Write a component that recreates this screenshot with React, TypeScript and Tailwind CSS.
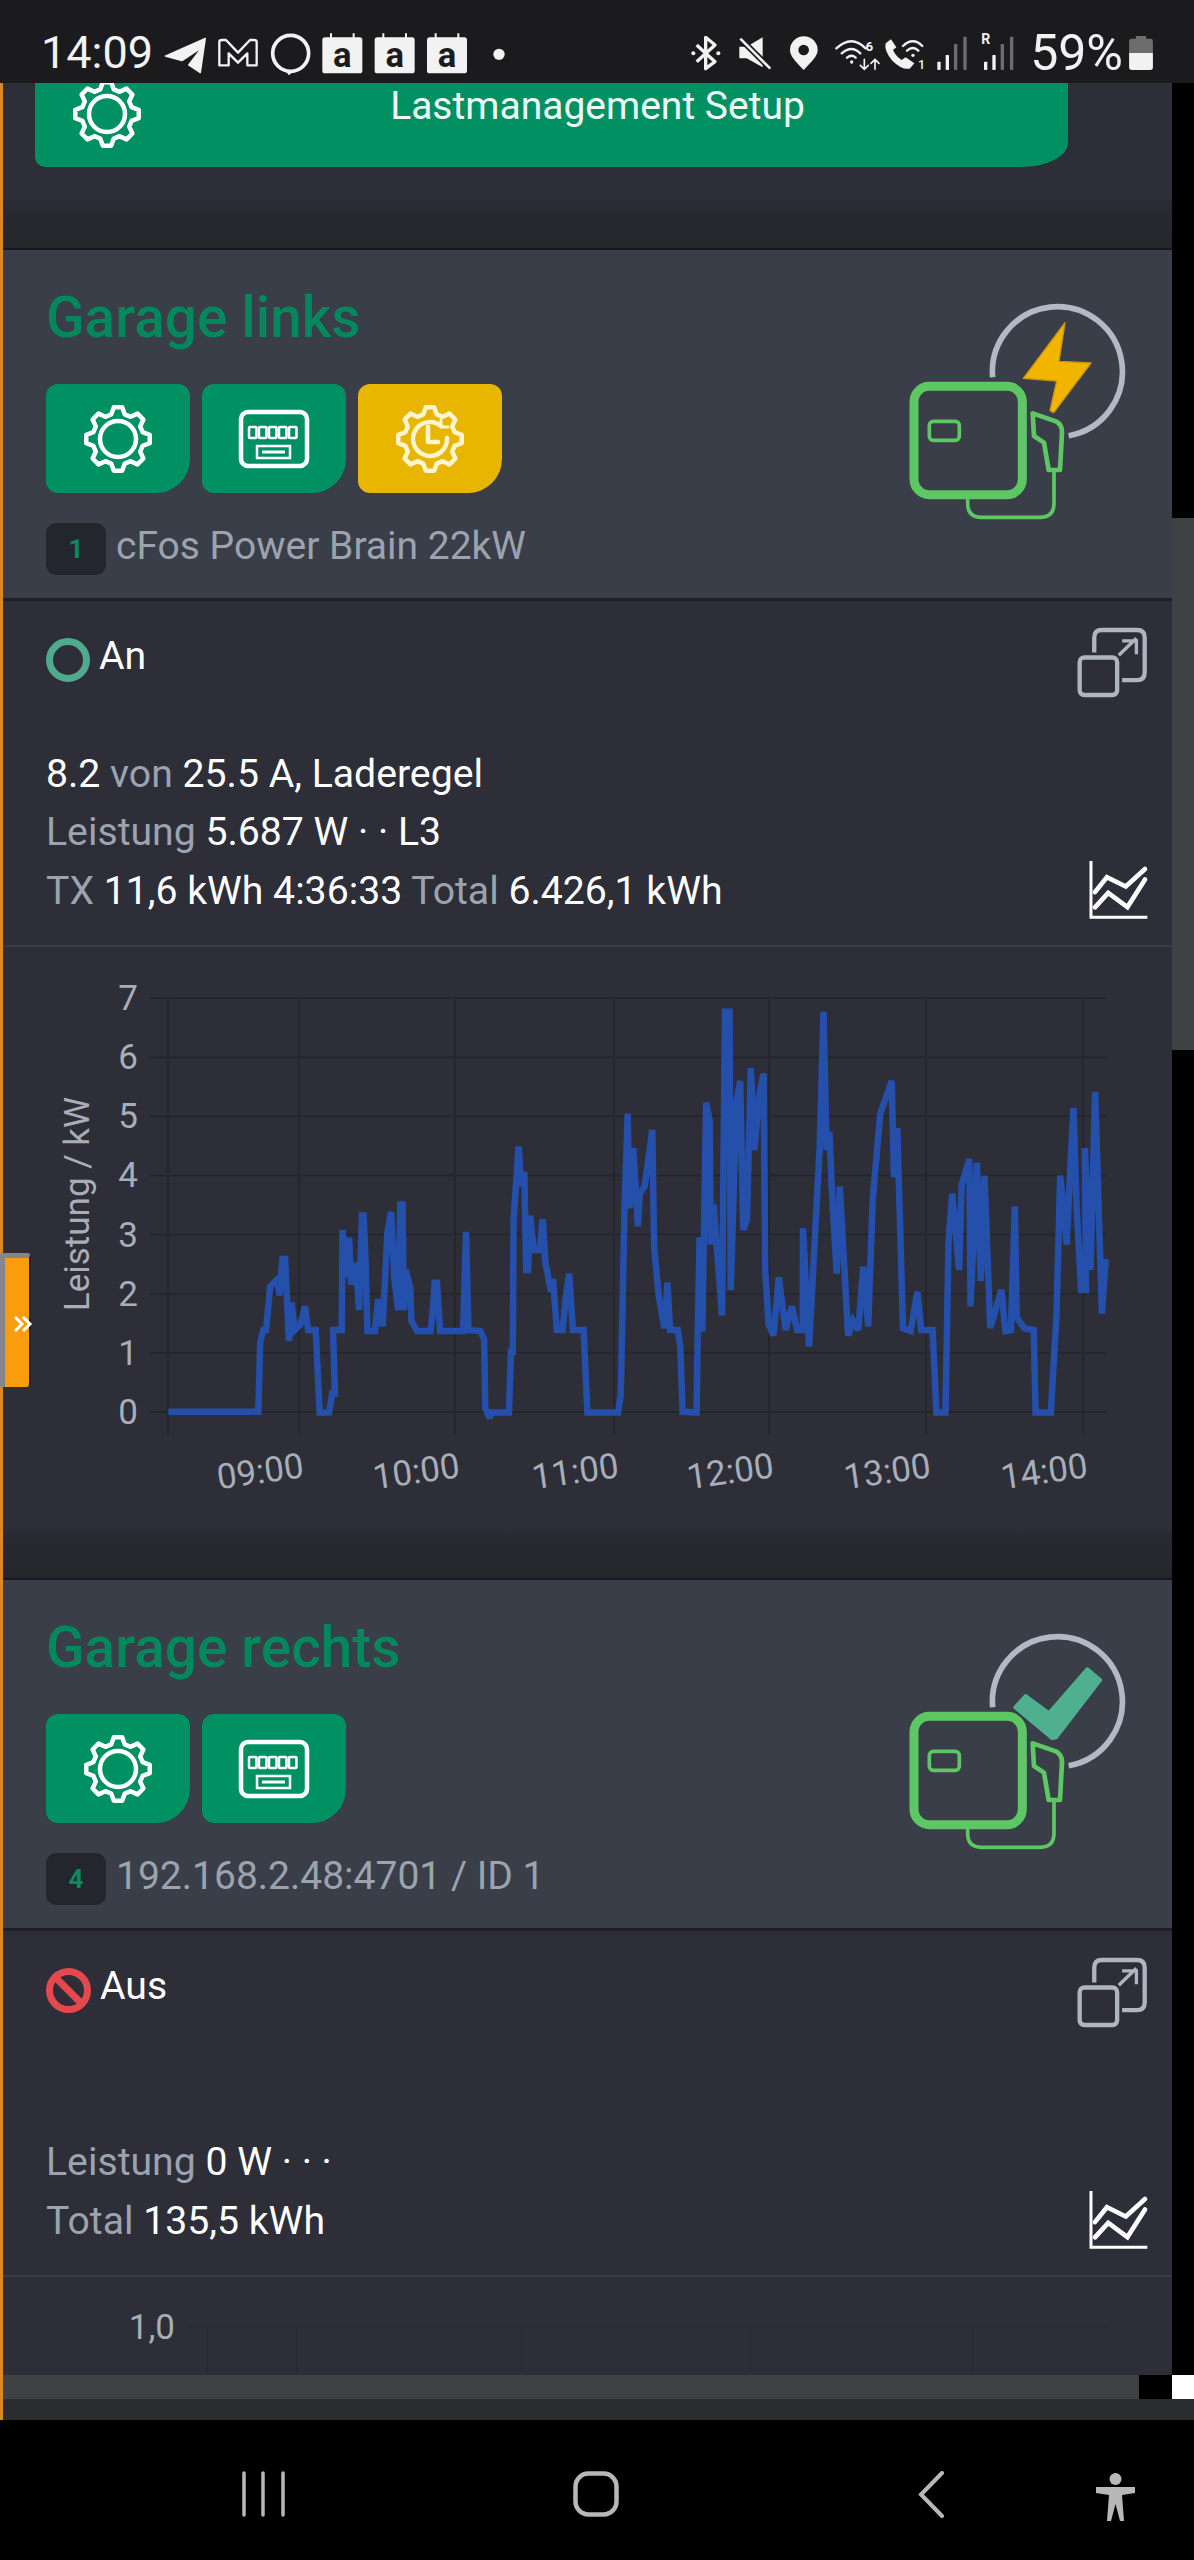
const leftTrace = [440,1270,675,1270,680,1080,688,1045,695,1045,706,925,725,905,730,950,738,850,745,850,755,1075,762,970,770,1045,785,1030,797,980,805,1045,825,1045,835,1272,860,1272,868,1220,875,1220,870,1045,893,1045,895,770,905,900,912,790,918,920,930,860,938,990,946,730,950,730,955,850,960,1048,980,1048,988,960,1000,1035,1012,780,1022,720,1030,900,1040,990,1046,700,1052,700,1055,990,1060,880,1072,930,1075,1020,1090,1048,1125,1048,1130,1000,1136,915,1142,915,1150,1048,1210,1048,1218,775,1224,1045,1255,1048,1265,1070,1268,1260,1280,1288,1282,1272,1330,1272,1335,1105,1340,1105,1342,740,1355,540,1362,650,1370,610,1375,880,1380,880,1385,730,1395,825,1410,825,1418,740,1425,860,1440,940,1445,905,1455,1045,1470,1045,1478,960,1487,890,1497,1045,1525,1045,1535,1272,1568,1272]
const rightTrace = [0,1272,48,1272,55,1220,65,700,73,450,78,710,88,545,100,760,105,670,118,650,138,495,143,820,155,950,170,1040,178,915,185,1045,205,1045,212,1090,218,1270,255,1272,258,1050,263,790,270,1050,280,420,290,470,292,810,300,700,322,1005,330,170,342,170,345,935,360,420,370,360,378,770,388,740,398,325,408,550,420,400,432,340,436,880,445,1030,458,1060,472,900,490,1045,507,980,520,1045,535,1045,536,765,552,1090,580,540,590,170,598,550,606,500,612,660,625,890,633,650,655,1060,668,1020,682,1045,695,870,708,1035,720,685,740,450,770,360,776,625,785,490,800,1040,820,1048,838,940,848,1045,878,1045,888,1272,912,1272,920,800,930,670,948,880,955,645,975,575,978,980,995,585,1005,910,1015,620,1030,1040,1060,935,1070,1048,1085,1045,1095,705,1100,1010,1120,1040,1145,1045,1150,1272,1190,1272,1205,1010,1215,620,1232,810,1240,630,1250,435,1258,700,1270,935,1283,935,1280,545,1295,880,1307,390,1325,1000,1335,850]

function tracePoints() {
  const out: string[] = []
  for (let i = 0; i < leftTrace.length; i += 2) {
    out.push(`${(leftTrace[i] / 2.613).toFixed(1)},${(950 + leftTrace[i + 1] / 2.75).toFixed(1)}`)
  }
  for (let i = 0; i < rightTrace.length; i += 2) {
    out.push(`${(600 + rightTrace[i] / 2.64).toFixed(1)},${(950 + rightTrace[i + 1] / 2.75).toFixed(1)}`)
  }
  return out.join(" ")
}

function gearPath() {
  let d = ""
  for (let i = 0; i < 8; i++) {
    const a = (i * Math.PI) / 4 - Math.PI / 2
    const pts = [[25.5, -0.27], [32, -0.13], [32, 0.13], [25.5, 0.27]]
    pts.forEach(([r, o], j) => {
      const x = (r * Math.cos(a + o)).toFixed(2)
      const y = (r * Math.sin(a + o)).toFixed(2)
      d += `${i === 0 && j === 0 ? "M" : "L"}${x} ${y} `
    })
  }
  return d + "Z"
}

const Gear = ({ clock = false, color = "#fff" }: { clock?: boolean; color?: string }) => (
  <svg width="72" height="72" viewBox="-36 -36 72 72" fill="none" stroke={color} strokeWidth="4.5" strokeLinejoin="round" strokeLinecap="round">
    <path d={gearPath()} />
    {clock ? (
      <>
        <path d="M11 -13 A17 17 0 1 0 17 -1" />
        <path d="M11 -19 V-12 H18" strokeWidth="3" />
        <path d="M-2 -12 V3 H8" />
      </>
    ) : (
      <circle r="18" />
    )}
  </svg>
)

const Meter = () => (
  <svg width="72" height="60" viewBox="0 0 72 60" fill="none" stroke="#fff">
    <rect x="3" y="3" width="66" height="54" rx="7" strokeWidth="4.5" />
    {[11, 21, 31, 41, 51].map((x) => (
      <rect key={x} x={x} y="18" width="7.5" height="11" rx="1" strokeWidth="2.5" />
    ))}
    <rect x="19" y="37" width="33" height="12" strokeWidth="2.5" />
    <path d="M24 43 H47" strokeWidth="3" />
  </svg>
)

const IconButton = ({ yellow = false, children }: { yellow?: boolean; children: React.ReactNode }) => (
  <div className={`flex h-[109px] w-[144px] items-center justify-center rounded-[12px] rounded-br-[34px] ${yellow ? "bg-[#e8b500]" : "bg-[#019062]"}`}>
    {children}
  </div>
)

const Charger = ({ ok = false }: { ok?: boolean }) => (
  <svg width="225" height="220" viewBox="135 90 675 660" fill="none" className="mr-[42px] mt-[50px] shrink-0">
    <path d="M398 322 A195 195 0 1 1 626 497" stroke="#b3b8c4" strokeWidth="17" />
    {ok ? (
      <polygon points="466,322 497,288 567,340 682,208 720,240 588,412 576,414" fill="#4fb08f" stroke="#4fb08f" strokeWidth="12" strokeLinejoin="round" />
    ) : (
      <polygon points="615,158 597,274 693,279 581,428 570,422 590,333 490,325" fill="#f1b500" stroke="#c9960c" strokeWidth="4" strokeLinejoin="round" />
    )}
    <rect x="162" y="349" width="325" height="325" rx="46" stroke="#5dc764" strokeWidth="27" />
    <rect x="208" y="454" width="90" height="57" rx="12" stroke="#5dc764" strokeWidth="11" />
    <path d="M323 686 V700 Q323 742 364 742 H540 Q582 742 582 700 V600" stroke="#5dc764" strokeWidth="11" />
    <path d="M518 430 L588 454 Q607 464 606 488 L600 600 L566 600 L552 518 L522 498 Z" stroke="#5dc764" strokeWidth="14" strokeLinejoin="round" />
  </svg>
)

const OpenIcon = () => (
  <svg width="72" height="73" viewBox="530 15 215 220" fill="none" stroke="#aeb4c0" strokeWidth="13" className="-mr-[2px] -mt-[1px] shrink-0">
    <path d="M581 95 V50 Q581 27 604 27 H710 Q733 27 733 50 V155 Q733 178 710 178 H665" />
    <rect x="537" y="110" width="113" height="113" rx="14" />
    <path d="M655 103 L708 52 M665 60 H708 V100" strokeWidth="10" />
  </svg>
)

const TrendIcon = () => (
  <svg width="61" height="59" viewBox="562 715 182 178" fill="none" stroke="#fff" className="mb-[1px] -mr-[2px] shrink-0">
    <path d="M570 718 V888 H740" strokeWidth="9" />
    <path d="M582 812 L618 767 L675 795 L733 742" strokeWidth="14" strokeLinecap="round" />
    <path d="M582 858 L622 814 L680 857 L733 774" strokeWidth="14" strokeLinecap="round" />
  </svg>
)

const W = ({ children }: { children: React.ReactNode }) => <span className="text-white">{children}</span>

const CardHeader = ({ title, num, sub, clock, ok }: { title: string; num: string; sub: string; clock?: boolean; ok?: boolean }) => (
  <>
    <div className="flex h-[2px] bg-[#17181b]" />
    <div className="flex h-[348px] justify-between bg-[#3a3e48]">
      <div className="pl-[43px] pt-[36px]">
        <h2 className="h-[98px] text-[56.7px] font-medium leading-[64px] text-[#03875c]">{title}</h2>
        <div className="flex gap-[12px]">
          <IconButton>
            <Gear />
          </IconButton>
          <IconButton>
            <Meter />
          </IconButton>
          {clock && (
            <IconButton yellow>
              <Gear clock color="#fff6d0" />
            </IconButton>
          )}
        </div>
        <div className="mt-[30px] flex items-start gap-[10px]">
          <span className="flex h-[52px] w-[60px] items-center justify-center rounded-[10px] bg-[#23262c] text-[26px] font-bold text-[#0a8a5f]">{num}</span>
          <span className="text-[39px] leading-[47px] text-[#9ca3af]">{sub}</span>
        </div>
      </div>
      <Charger ok={ok} />
    </div>
    <div className="h-[3px] bg-[#1e1f28]" />
  </>
)

const CardBody = ({ status, lines }: { status: React.ReactNode; lines: React.ReactNode }) => (
  <>
    <div className="flex h-[344px] flex-col justify-between pb-[25px] pl-[43px] pr-[25px] pt-[26px] text-[39.2px] leading-[58.5px] text-[#9ca3af]">
      <div className="flex items-start justify-between">
        <div className="flex items-start gap-[9px] text-white">{status}</div>
        <OpenIcon />
      </div>
      <div className="flex items-end justify-between">
        <div>{lines}</div>
        <TrendIcon />
      </div>
    </div>
    <div className="h-[2px] bg-[#3a3b46]" />
  </>
)

const Chart = () => {
  const ys = [0, 1, 2, 3, 4, 5, 6, 7]
  const hours = [[299, "09:00"], [455, "10:00"], [614, "11:00"], [769, "12:00"], [926, "13:00"], [1083, "14:00"]] as const
  return (
    <svg width="1169" height="583" viewBox="3 947 1169 583" className="block">
      <g stroke="#25262c" strokeWidth="2">
        {ys.map((v) => (
          <path key={v} d={`M149 ${1412 - v * 59.14} H1107`} />
        ))}
        {[168, ...hours.map((h) => h[0])].map((x) => (
          <path key={x} d={`M${x} 998 V1435`} />
        ))}
      </g>
      <g fontSize="35" fill="#a8adb8">
        {ys.map((v) => (
          <text key={v} x="138" y={1412 - v * 59.14 + 12} textAnchor="end">
            {v}
          </text>
        ))}
        {hours.map(([x, t]) => (
          <text key={t} x={x + 6} y="1477" textAnchor="end" transform={`rotate(-8 ${x + 6} 1477)`}>
            {t}
          </text>
        ))}
        <text x="0" y="0" textAnchor="middle" transform="translate(89 1204) rotate(-90)">
          Leistung / kW
        </text>
      </g>
      <polyline points={tracePoints()} fill="none" stroke="#2450ac" strokeWidth="6.5" strokeLinejoin="miter" strokeMiterlimit="3" />
    </svg>
  )
}

const MiniChart = () => (
  <svg width="1169" height="97" viewBox="3 2278 1169 97" className="block">
    <g stroke="#292a32" strokeWidth="2">
      <path d="M190 2328 H1108" />
      {[207, 297, 522, 750, 973].map((x) => (
        <path key={x} d={`M${x} 2328 V2375`} />
      ))}
    </g>
    <text x="175" y="2340" textAnchor="end" fontSize="35" fill="#a8adb8">
      1,0
    </text>
  </svg>
)

const Gap = () => <div className="h-[48px] bg-gradient-to-b from-[#2a2b33] to-[#25262b]" />

const StatusLeft = () => (
  <svg width="344" height="47" viewBox="498 30 1032 141" fill="none" className="ml-[11px]">
    <path d="M502 108 L622 55 L607 158 L572 135 L612 82 L552 122 Z" fill="#f2f2f2" stroke="#f2f2f2" strokeWidth="4" strokeLinejoin="round" />
    <path d="M664 136 V66 Q664 60 672 60 H684 L720 98 L756 60 H768 Q776 60 776 66 V136 H748 V100 L720 128 L692 100 V136 Z" stroke="#f2f2f2" strokeWidth="7" strokeLinejoin="round" />
    <circle cx="878" cy="100" r="54" stroke="#f2f2f2" strokeWidth="11" />
    <path d="M862 150 L872 166 L890 152 Z" fill="#f2f2f2" />
    {[973, 1130, 1287].map((x) => (
      <g key={x}>
        <rect x={x} y="52" width="120" height="108" rx="8" fill="#f2f2f2" />
        <path d={`M${x + 26} 40 V54 M${x + 94} 40 V54`} stroke="#f2f2f2" strokeWidth="6" />
        <text x={x + 60} y="140" textAnchor="middle" fontSize="104" fontWeight="700" fill="#1b1b1d">
          a
        </text>
      </g>
    ))}
    <circle cx="1503" cy="103" r="17" fill="#f2f2f2" />
  </svg>
)

const StatusRight = () => (
  <svg width="325" height="47" viewBox="25 30 975 141" fill="none">
    <path d="M45 75 L100 125 L72 146 V52 L100 75 L45 125" stroke="#f2f2f2" strokeWidth="10" strokeLinejoin="round" />
    <circle cx="35" cy="100" r="6" fill="#f2f2f2" />
    <circle cx="110" cy="100" r="6" fill="#f2f2f2" />
    <path d="M173 80 H195 L243 52 V142 L195 115 H173 Z" fill="#f2f2f2" />
    <path d="M172 52 L268 148" stroke="#1b1b1d" strokeWidth="18" />
    <path d="M176 56 L266 146" stroke="#f2f2f2" strokeWidth="8" />
    <path fillRule="evenodd" d="M366 150 C340 122 325 108 325 90 A41 41 0 0 1 408 90 C408 108 392 122 366 150 Z M366 74 A16 16 0 1 0 366 106 A16 16 0 1 0 366 74 Z" fill="#f2f2f2" />
    <g stroke="#f2f2f2" strokeWidth="7" strokeLinecap="round">
      <path d="M464 85 Q510 42 552 85 M480 100 Q510 74 536 100 M496 113 Q510 102 522 113" />
      <path d="M548 118 V148 M536 136 L548 148 L560 136 M580 148 V118 M568 130 L580 118 L592 130" strokeWidth="5" />
      <path d="M664 78 Q694 50 722 78 M676 92 Q694 76 710 92" />
    </g>
    <text x="563" y="92" textAnchor="middle" fontSize="40" fontWeight="700" fill="#f2f2f2">
      6
    </text>
    <circle cx="510" cy="126" r="5" fill="#f2f2f2" />
    <circle cx="694" cy="106" r="5" fill="#f2f2f2" />
    <path d="M628 58 L612 70 Q606 92 632 122 Q660 150 684 146 L698 130 L672 112 L660 120 Q642 108 634 90 L644 82 Z" fill="#f2f2f2" />
    <text x="720" y="148" textAnchor="middle" fontSize="38" fontWeight="500" fill="#f2f2f2">
      1
    </text>
    {[[772, 125, "#f2f2f2"], [797, 105, "#f2f2f2"], [822, 72, "#6d6d6d"], [850, 50, "#6d6d6d"], [912, 125, "#f2f2f2"], [937, 105, "#f2f2f2"], [962, 72, "#6d6d6d"], [990, 50, "#6d6d6d"]].map(([x, y, c]) => (
      <rect key={x as number} x={(x as number) - 5} y={y as number} width="10" height={150 - (y as number)} rx="2" fill={c as string} />
    ))}
    <text x="912" y="72" textAnchor="middle" fontSize="42" fontWeight="700" fill="#f2f2f2">
      R
    </text>
  </svg>
)

const Battery = () => (
  <svg width="24" height="34" viewBox="0 0 70 100">
    <path d="M20 0 H50 V8 H62 Q70 8 70 16 V50 H0 V16 Q0 8 8 8 H20 Z" fill="#6d6d6d" />
    <path d="M0 50 H70 V92 Q70 100 62 100 H8 Q0 100 0 92 Z" fill="#f2f2f2" />
  </svg>
)

export default function App() {
  return (
    <div className="flex h-[2560px] w-[1194px] flex-col overflow-hidden bg-black font-[Roboto,sans-serif]">
      {/* status bar */}
      <div className="flex h-[83px] items-start justify-between bg-[#1b1b1d] pl-[41px] pr-[41px] pt-[27px] text-[#f2f2f2]">
        <div className="flex items-center">
          <span className="text-[45px] leading-[52px]">14:09</span>
          <StatusLeft />
        </div>
        <div className="flex items-center">
          <StatusRight />
          <span className="ml-[15px] mr-[6px] text-[50px] leading-[52px]">59%</span>
          <Battery />
        </div>
      </div>

      <div className="relative flex h-[2337px] flex-col border-l-[3px] border-[#d68a1f]">
        <div className="flex h-[2292px]">
          {/* page */}
          <div className="w-[1169px] overflow-hidden bg-[#2d2e38]">
            <div className="h-[117px]">
              <div className="ml-[32px] flex h-[84px] w-[1033px] items-center overflow-hidden rounded-bl-[10px] rounded-br-[47px_24px] bg-[#019062] pl-[36px] pr-[16px]">
                <div className="-mt-[22px]">
                  <Gear />
                </div>
                <span className="-mt-[38px] flex-1 text-center text-[39px] leading-[44px] text-[#eefbf5]">Lastmanagement Setup</span>
              </div>
            </div>
            <Gap />

            <CardHeader title="Garage links" num="1" sub="cFos Power Brain 22kW" clock />
            <CardBody
              status={
                <>
                  <span className="mt-[11px] h-[44px] w-[44px] rounded-full border-[7px] border-[#4fa98c]" />
                  <span>An</span>
                </>
              }
              lines={
                <>
                  <p>
                    <W>8.2</W> von <W>25.5 A, Laderegel</W>
                  </p>
                  <p>
                    Leistung <W>5.687 W · · L3</W>
                  </p>
                  <p>
                    TX <W>11,6 kWh 4:36:33</W> Total <W>6.426,1 kWh</W>
                  </p>
                </>
              }
            />
            <Chart />
            <Gap />

            <CardHeader title="Garage rechts" num="4" sub="192.168.2.48:4701 / ID 1" ok />
            <CardBody
              status={
                <>
                  <svg width="45" height="45" viewBox="0 0 45 45" fill="none" stroke="#e5484d" strokeWidth="7" className="mt-[11px]">
                    <circle cx="22.5" cy="22.5" r="19" />
                    <path d="M9 9 L36 36" />
                  </svg>
                  <span>Aus</span>
                </>
              }
              lines={
                <>
                  <p>
                    Leistung <W>0 W · · ·</W>
                  </p>
                  <p>
                    Total <W>135,5 kWh</W>
                  </p>
                </>
              }
            />
            <MiniChart />
          </div>
          {/* vertical scrollbar */}
          <div className="flex w-[22px] flex-col">
            <div className="h-[435px] bg-black" />
            <div className="h-[532px] bg-[#3e4244]" />
            <div className="flex-1 bg-black" />
          </div>
        </div>
        {/* horizontal scrollbar */}
        <div className="flex h-[24px]">
          <div className="w-[1136px] bg-[#3e4244]" />
          <div className="w-[33px] bg-black" />
          <div className="flex-1 bg-white" />
        </div>
        <div className="h-[21px] bg-[#2a2c30]" />

        {/* side handle */}
        <div className="absolute -left-[3px] top-[1170px] flex h-[134px] w-[31px] items-center justify-end rounded-r-[4px] border-t-[5px] border-l-[5px] border-r-[2px] border-t-[#85868a] border-l-[#85868a] border-r-[#1f2024] bg-[#f99c0d]">
          <svg width="20" height="16" viewBox="0 0 20 16" fill="none" stroke="#fff" strokeWidth="3" className="-mr-[5px] mt-[3px]">
            <path d="M1 1 L8 8 L1 15 M9 1 L16 8 L9 15" />
          </svg>
        </div>
      </div>

      {/* nav bar */}
      <div className="flex h-[140px] items-start bg-black pl-[242px] pt-[51px]">
        <svg width="43" height="46" viewBox="0 0 43 46" fill="none" stroke="#b8b8b8" strokeWidth="3.5" strokeLinecap="round">
          <path d="M2 2 V44 M21 2 V44 M41 2 V44" />
        </svg>
        <svg width="46" height="46" viewBox="0 0 46 46" fill="none" stroke="#b8b8b8" strokeWidth="4.5" className="ml-[288px]">
          <rect x="2.5" y="2.5" width="41" height="41" rx="13" />
        </svg>
        <svg width="26" height="47" viewBox="0 0 26 47" fill="none" stroke="#b8b8b8" strokeWidth="4" strokeLinecap="round" className="ml-[299px]">
          <path d="M24 2 L3 23.5 L24 45" />
        </svg>
        <svg width="41" height="49" viewBox="0 0 41 49" fill="#b8b8b8" className="ml-[151px] mt-[2px]">
          <circle cx="20.5" cy="6" r="6" />
          <path d="M1 14 H40 V20 L27 22 L29 48 L25 48 L20.5 31 L16 48 L12 48 L14 22 L1 20 Z" />
        </svg>
      </div>
    </div>
  )
}
